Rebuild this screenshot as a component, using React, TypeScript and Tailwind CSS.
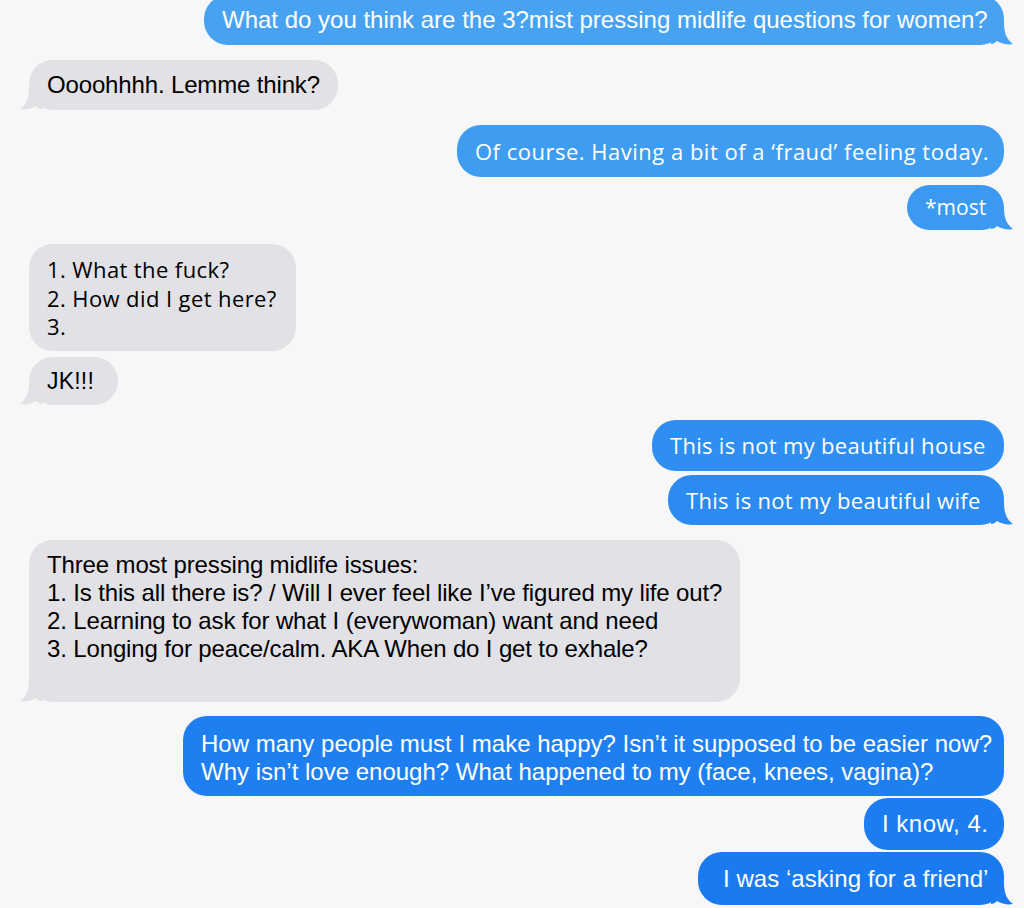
import React from "react";

type Msg = {
  me: boolean;
  tail?: boolean;
  fill: string;
  box: string;
  txt: string;
  lines: string[];
};

const CONDENSED = "font-['Liberation_Sans',Arial,sans-serif]";
const WIDE = "font-['Open_Sans','Noto_Sans',sans-serif]";

const messages: Msg[] = [
  {
    me: true,
    tail: true,
    fill: "#47a3f2",
    box: "-mt-[5px] w-[800px] h-[50px] bg-[#47a3f2] items-center",
    txt: `${CONDENSED} text-[24px] tracking-[0px]`,
    lines: ["What do you think are the 3?mist pressing midlife questions for women?"],
  },
  {
    me: false,
    tail: true,
    fill: "#e2e1e6",
    box: "mt-[15px] w-[309px] h-[50px] bg-[#e2e1e6] items-center",
    txt: `${CONDENSED} text-[24px] tracking-[-0.15px]`,
    lines: ["Oooohhhh. Lemme think?"],
  },
  {
    me: true,
    fill: "#3f9df1",
    box: "mt-[15px] w-[547px] h-[52px] bg-[#3f9df1] items-center",
    txt: `${WIDE} text-[22px] tracking-[0.5px]`,
    lines: ["Of course. Having a bit of a \u2018fraud\u2019 feeling today."],
  },
  {
    me: true,
    tail: true,
    fill: "#3b99f1",
    box: "mt-[8px] w-[97px] h-[45px] bg-[#3b99f1] items-center",
    txt: `${WIDE} text-[21px]`,
    lines: ["*most"],
  },
  {
    me: false,
    fill: "#e2e1e6",
    box: "mt-[14px] w-[267px] h-[107px] bg-[#e2e1e6] pt-[11px] leading-[28.5px]",
    txt: `${WIDE} text-[22px] tracking-[0.4px]`,
    lines: ["1. What the fuck?", "2. How did I get here?", "3."],
  },
  {
    me: false,
    tail: true,
    fill: "#e2e1e6",
    box: "mt-[6px] w-[89px] h-[48px] bg-[#e2e1e6] items-center",
    txt: `${CONDENSED} text-[23px] tracking-[0.2px]`,
    lines: ["JK!!!"],
  },
  {
    me: true,
    fill: "#2e8ef1",
    box: "mt-[15px] w-[352px] h-[51px] bg-[#2e8ef1] items-center",
    txt: `${WIDE} text-[22px] tracking-[0.3px]`,
    lines: ["This is not my beautiful house"],
  },
  {
    me: true,
    tail: true,
    fill: "#2b8bf1",
    box: "mt-[4px] w-[336px] h-[50px] bg-[#2b8bf1] items-center",
    txt: `${WIDE} text-[22px] tracking-[0.3px]`,
    lines: ["This is not my beautiful wife"],
  },
  {
    me: false,
    tail: true,
    fill: "#e2e1e6",
    box: "mt-[15px] w-[711px] h-[162px] bg-[#e2e1e6] pt-[11px] leading-[28px]",
    txt: `${CONDENSED} text-[24px] tracking-[-0.14px]`,
    lines: [
      "Three most pressing midlife issues:",
      "1. Is this all there is? / Will I ever feel like I\u2019ve figured my life out?",
      "2. Learning to ask for what I (everywoman) want and need",
      "3. Longing for peace/calm. AKA When do I get to exhale?",
    ],
  },
  {
    me: true,
    fill: "#1e80f0",
    box: "mt-[14px] w-[821px] h-[80px] bg-[#1e80f0] pt-[14px] leading-[28px]",
    txt: `${CONDENSED} text-[24px] tracking-[0px]`,
    lines: [
      "How many people must I make happy? Isn\u2019t it supposed to be easier now?",
      "Why isn\u2019t love enough? What happened to my (face, knees, vagina)?",
    ],
  },
  {
    me: true,
    fill: "#1b7df0",
    box: "mt-[2px] w-[140px] h-[52px] bg-[#1b7df0] items-center",
    txt: `${CONDENSED} text-[24px] tracking-[0.5px]`,
    lines: ["I know, 4."],
  },
  {
    me: true,
    tail: true,
    fill: "#1a7bf0",
    box: "mt-[2px] w-[306px] h-[53px] bg-[#1a7bf0] items-center pl-[25px]",
    txt: `${CONDENSED} text-[24px] tracking-[0.05px]`,
    lines: ["I was \u2018asking for a friend\u2019"],
  },
];

function Tail({ me, fill }: { me: boolean; fill: string }) {
  // little iMessage hook at the bottom corner
  return (
    <svg
      width="22"
      height="23"
      viewBox="0 0 22 23"
      className={
        me
          ? "absolute -right-[9px] bottom-0"
          : "absolute -left-[9px] bottom-0 -scale-x-100"
      }
    >
      <path
        d="M0 0 H13 C13 10 15 17 22 22 C17 23 11 22 6 19 C4 21 2 22 0 22 Z"
        fill={fill}
      />
    </svg>
  );
}

function Bubble({ m }: { m: Msg }) {
  return (
    <div
      className={`relative flex rounded-[24px] px-[18px] ${m.box} ${
        m.me ? "self-end mr-[20px] text-white" : "self-start ml-[29px] text-black"
      }`}
    >
      {m.tail && <Tail me={m.me} fill={m.fill} />}
      <div className={`relative whitespace-nowrap ${m.txt}`}>
        {m.lines.map((line, i) => (
          <div key={i}>{line}</div>
        ))}
      </div>
    </div>
  );
}

export default function App() {
  return (
    <div className="w-[1024px] h-[908px] overflow-hidden bg-[#f7f7f7] flex flex-col">
      {messages.map((m, i) => (
        <Bubble key={i} m={m} />
      ))}
    </div>
  );
}
